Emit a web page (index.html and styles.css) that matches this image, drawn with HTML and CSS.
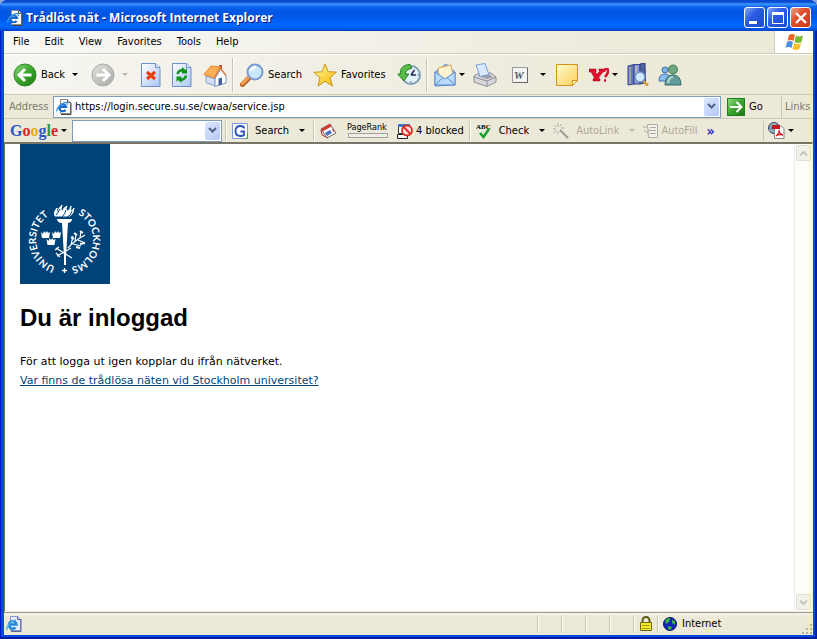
FILE: index.html
```html
<!DOCTYPE html>
<html lang="sv">
<head>
  <meta charset="UTF-8">
  <meta name="viewport" content="width=device-width, initial-scale=1.0">
  <title>Trådlöst nät - Microsoft Internet Explorer</title>
  <link rel="stylesheet" href="styles.css">
</head>
<body>

<svg class="defs" width="0" height="0" aria-hidden="true">
  <defs>
    <linearGradient id="green" x1="0" y1="0" x2="1" y2="1"><stop offset="0" stop-color="#8fdc7c"/><stop offset=".5" stop-color="#3aa52c"/><stop offset="1" stop-color="#1c7a14"/></linearGradient>
    <linearGradient id="grey" x1="0" y1="0" x2="1" y2="1"><stop offset="0" stop-color="#e4e4e0"/><stop offset="1" stop-color="#a4a4a0"/></linearGradient>
    <linearGradient id="sheet" x1="0" y1="0" x2="1" y2="1"><stop offset="0" stop-color="#fff"/><stop offset="1" stop-color="#a9c6f5"/></linearGradient>
    <linearGradient id="note" x1="0" y1="0" x2="1" y2="1"><stop offset="0" stop-color="#fffbd0"/><stop offset="1" stop-color="#fbcf55"/></linearGradient>
    <linearGradient id="gold" x1="0" y1="0" x2="1" y2="1"><stop offset="0" stop-color="#fffca0"/><stop offset="1" stop-color="#f5b400"/></linearGradient>
    <symbol id="iepage" viewBox="0 0 16 16">
      <path d="M4.500.5h7l3 3v11h-10z" fill="#fdfcf4" stroke="#8a8a86"/>
      <path d="M11.500.5v3h3" fill="#ddd" stroke="#555"/>
      <path d="M15 4v11.500H5" fill="none" stroke="#444"/>
      <path d="M9.500 10.800A3.400 3.400 0 1 1 10 8H4" fill="none" stroke="#1767cf" stroke-width="2.200"/>
      <path d="M1 12.500C-.5 10 5 4.500 9 3.500c2.500-.4 2.500 1 2 2.500" fill="none" stroke="#3a98e4" stroke-width="1.300"/>
    </symbol>
  </defs>
</svg>

<div class="window">
  <header class="titlebar">
    <svg class="icon16"><use href="#iepage"/></svg>
    <span class="caption">Trådlöst nät - Microsoft Internet Explorer</span>
    <div class="controls">
      <button class="control" aria-label="Minimize"><svg width="20" height="20"><path d="M4 13h8v3H4z" fill="#fff"/></svg></button>
      <button class="control" aria-label="Maximize"><svg width="20" height="20"><path d="M4 4h12v12H4zM5 7v8h10V7z" fill="#fff" fill-rule="evenodd"/></svg></button>
      <button class="control close" aria-label="Close"><svg width="20" height="20"><path d="M5 5l10 10M15 5L5 15" stroke="#fff" stroke-width="2.400"/></svg></button>
    </div>
  </header>

  <nav class="menubar">
    <button>File</button>
    <button>Edit</button>
    <button>View</button>
    <button>Favorites</button>
    <button>Tools</button>
    <button>Help</button>
    <div class="flag">
      <svg width="20" height="19" viewBox="0 0 20 19">
        <path d="M5 2q3-2 6 0L9.500 8q-3-2-6 0z" fill="#e8622c"/>
        <path d="M12 2.500q3 2 7 0L17.500 9q-4 2-7 0z" fill="#7ab833"/>
        <path d="M3 9q3-2 6 0l-1.500 6q-3-2-6 0z" fill="#4a90e0"/>
        <path d="M10.200 10q3 2 7 0l-1.700 6q-3.500 2-7 0z" fill="#fbc02a"/>
      </svg>
    </div>
  </nav>

  <div class="toolbar">
    <button class="tool back">
      <svg width="24" height="24"><circle cx="12" cy="12" r="11" fill="url(#green)" stroke="#2b8a26"/><path d="M18.500 12H7M12 6l-6 6 6 6" fill="none" stroke="#fff" stroke-width="3"/></svg>
      <span>Back</span>
    </button>
    <button class="drop" aria-label="Back history"></button>
    <button class="tool forward" aria-label="Forward" disabled>
      <svg width="24" height="24"><circle cx="12" cy="12" r="11" fill="url(#grey)" stroke="#aaa"/><path d="M5.500 12H17M12 6l6 6-6 6" fill="none" stroke="#fff" stroke-width="3"/></svg>
    </button>
    <button class="drop" aria-label="Forward history" disabled></button>
    <button class="tool wide" aria-label="Stop">
      <svg width="20" height="24"><path d="M.5.500h14l4.500 4v19H.5z" fill="url(#sheet)" stroke="#6f8fc9"/><path d="M14.500.5v4H19" fill="#dbe6fa" stroke="#6f8fc9"/><path d="M6 9l8 7M14 9l-8 7" stroke="#ee3a10" stroke-width="3"/></svg>
    </button>
    <button class="tool wide" aria-label="Refresh">
      <svg width="20" height="24"><path d="M.5.500h14l4.500 4v19H.5z" fill="url(#sheet)" stroke="#6f8fc9"/><path d="M14.500.5v4H19" fill="#dbe6fa" stroke="#6f8fc9"/><path d="M5.500 11q1-4 6-4M14 12.500q-1 4.500-6 4.500" fill="none" stroke="#12911a" stroke-width="2.500"/><path d="M10 4v6.500h5V5l-1.500 2zM9.500 20v-6.500h-5V19L6 17z" fill="#12911a"/></svg>
    </button>
    <button class="tool" aria-label="Home">
      <svg width="24" height="24"><path d="M3 13l9 3v7l-9-3.500z" fill="#d3dff6" stroke="#8aa0cc"/><path d="M12 15l6-9 5 7v7l-11 3.500z" fill="#fff" stroke="#7c94c8"/><path d="M16 2h3v5l-3-2z" fill="#b55a3c"/><path d="M.8 11.500L8 3l9.500 1-6 11z" fill="#fbb055" stroke="#e58a2a"/><path d="M17 3.500l6.500 8.500-1 1L17 6l-5 9.500-1-1z" fill="#d97a3a"/><path d="M15.500 15.500l3.500-1v7l-3.500 1z" fill="#44609c"/></svg>
    </button>
    <span class="sep"></span>
    <button class="tool wide">
      <svg width="24" height="24"><path d="M2.500 21.500l7-7" stroke="#b8632c" stroke-width="5" stroke-linecap="round"/><path d="M2.500 20.500l6.500-6.500" stroke="#f4a04c" stroke-width="3" stroke-linecap="round"/><circle cx="15" cy="9" r="7.500" fill="#c9e9ff" stroke="#7d99cf" stroke-width="2"/><path d="M10 8q2-4 6-4" stroke="#fff" stroke-width="2.500" fill="none"/></svg>
      <span>Search</span>
    </button>
    <button class="tool wide">
      <svg width="24" height="24"><path d="M12 .8l3.200 7.900 8.300.4-6.400 5.500 2.400 8.500-7.500-4.900-7 4.900 2-8.500L.7 9.300l8.300-.5z" fill="url(#gold)" stroke="#c9961a"/></svg>
      <span>Favorites</span>
    </button>
    <button class="tool" aria-label="History">
      <svg width="24" height="24"><circle cx="14" cy="12" r="9" fill="#e4f2fb" stroke="#7ba0b5" stroke-width="2"/><path d="M14 12l3.500-5M14 12h5" stroke="#225" stroke-width="1.500"/><path d="M14 4v2M14 18v2M20 12h2" stroke="#58a"/><path d="M13 1.500C6 1.500 2.500 6 3.500 11H.8l6 7 5-7H8.500c0-3 2-5 6-5.500z" fill="#5bbb4a" stroke="#237f22"/></svg>
    </button>
    <span class="sep"></span>
    <button class="tool mail" aria-label="Mail">
      <svg width="22" height="24"><path d="M1 9l11-8 9 8v13L1 23z" fill="#8dbcf0" stroke="#5c8bd0"/><path d="M4 5l13-3 2 10-8 5-6-4z" fill="#fff3cf" stroke="#e0a55c"/><path d="M1 9l10 7L21 9v13H1z" fill="#b9dbfa" stroke="#5c8bd0"/><path d="M1 22l8-7.500M21 22l-8-7.500" stroke="#5c8bd0"/></svg>
    </button>
    <button class="drop near" aria-label="Mail options"></button>
    <button class="tool print" aria-label="Print">
      <svg width="24" height="24"><path d="M1 13l5-3h12l5 4v5l-9 4.500L1 19z" fill="#d8d8dc" stroke="#8c8c98"/><path d="M1 14l13 4 9-4M14 18v5" fill="none" stroke="#8c8c98"/><path d="M6 11.500h10l4 2.500-6 2-9-3z" fill="#9b9ba6"/><path d="M3 2l9-1.500 4 11-9 2z" fill="#d9e9ff" stroke="#7ba0dc"/></svg>
    </button>
    <button class="tool word" aria-label="Edit with Word">
      <svg width="16" height="16"><path d="M.5.500h15v15H.5z" fill="#f4f4f4" stroke="#999"/><path d="M1 15.500h14.500V1" fill="none" stroke="#666"/><text x="2" y="12">W</text></svg>
    </button>
    <button class="drop mid" aria-label="Edit options"></button>
    <button class="tool wide" aria-label="Note">
      <svg width="22" height="22"><path d="M.5.500h21v16l-5 5H.5z" fill="url(#note)" stroke="#d2951a"/><path d="M21.500 16.500h-5v5z" fill="#fff5c0" stroke="#d2951a"/></svg>
    </button>
    <button class="tool yahoo" aria-label="Yahoo! Messenger">
      <svg width="20" height="14"><path d="M0 1h7v3H6l2 2 3-3h-1V1h5v3h-1l-4 5v2h1v2H4v-2h1V9L2 4H0z" fill="#e3122c" stroke="#8e0b1c" stroke-width=".5"/><path d="M15 4q0-3 2.500-3T19 4t-3 5M15 12.500h2" stroke="#e3122c" stroke-width="2.500" fill="none"/></svg>
    </button>
    <button class="drop near" aria-label="Yahoo! options"></button>
    <button class="tool research" aria-label="Research">
      <svg width="24" height="24"><path d="M2 3l6-1.500V21L2 22z" fill="#6478c8" stroke="#36458c"/><path d="M8 1.500h6V21H8z" fill="#8c9be0" stroke="#36458c"/><path d="M14 1l5-1 .5 20-5.500 1z" fill="#51639e" stroke="#2e3d74"/><path d="M10 3v16M4 4v17" stroke="#d9c98a"/><path d="M17 18l5 4.500" stroke="#d79a3e" stroke-width="3"/><circle cx="14" cy="14" r="5" fill="#cdeaff" stroke="#6d8ec4" stroke-width="1.500"/></svg>
    </button>
    <button class="tool" aria-label="Messenger">
      <svg width="24" height="22"><circle cx="7" cy="6" r="3" fill="#7ab2e6" stroke="#3c72ac"/><path d="M1 17q0-7 6-7t6 7z" fill="#8abcf0" stroke="#3c72ac"/><circle cx="15" cy="5.500" r="4.500" fill="#6fa57f" stroke="#40785a"/><path d="M7 21q0-10 8-10t8 10z" fill="#5f9c9a" stroke="#35706e"/><path d="M10 19q1-6 5-6" stroke="#b7dccb" stroke-width="2" fill="none"/></svg>
    </button>
  </div>

  <div class="addressbar">
    <label for="address">Address</label>
    <div class="combo">
      <svg class="icon16"><use href="#iepage"/></svg>
      <input id="address" type="text" value="https://login.secure.su.se/cwaa/service.jsp">
      <button class="open" aria-label="Show addresses"><svg width="9" height="7"><path d="M1 1l3.500 3.500L8 1" fill="none" stroke="#4d6185" stroke-width="2"/></svg></button>
    </div>
    <button class="go">
      <svg width="18" height="18"><path d="M0 0h18v18H0z" fill="#1d7f28"/><path d="M1 1h16v16H1z" fill="url(#green)"/><path d="M3 9h11M9.500 4l5 5-5 5" fill="none" stroke="#fff" stroke-width="2"/></svg>
      <span>Go</span>
    </button>
    <span class="links">Links</span>
  </div>

  <div class="googlebar">
    <button class="google" aria-label="Google"><span class="blue">G</span><span class="red">o</span><span class="yellow">o</span><span class="blue">g</span><span class="green">l</span><span class="red">e</span></button>
    <button class="drop tight" aria-label="Google menu"></button>
    <div class="combo query">
      <input type="text" aria-label="Search terms">
      <button class="open" aria-label="Show searches"><svg width="9" height="7"><path d="M1 1l3.500 3.500L8 1" fill="none" stroke="#4d6185" stroke-width="2"/></svg></button>
    </div>
    <span class="sep"></span>
    <button class="gtool">
      <svg width="16" height="16"><path d="M.5.500h15v15H.5z" fill="#fff" stroke="#7c9ce0"/><path d="M12.500 5.500Q11.500 3 8.500 3 3.500 3 3.500 8t5 5q2.500 0 3.500-1V8.500H8.500" fill="none" stroke="#2b4fb8" stroke-width="1.800"/><path d="M13 15.500h2.500v-5" stroke="#3a9a3a" fill="none"/></svg>
      <span>Search</span>
    </button>
    <button class="drop" aria-label="Search options"></button>
    <span class="sep"></span>
    <button class="gtool" aria-label="News">
      <svg width="17" height="16"><path d="M1 6l9-5 6 9-9 5z" fill="#fff" stroke="#666"/><path d="M1 6l9-5 1.500 2.500-9 5z" fill="#d43a30"/><path d="M5 10l5-3 2 3-5 3z" fill="#4a70c0"/><path d="M12 6l2 3M1 7l1 5 6 3" stroke="#b33" fill="none"/></svg>
    </button>
    <div class="rank"><span>PageRank</span><i></i></div>
    <button class="gtool blocked">
      <svg width="16" height="16"><path d="M1.500 1.500h11v9h-11z" fill="#fff" stroke="#333"/><path d="M1 1h12v3H1z" fill="#3d79c8"/><path d="M.5 11.500h10v4H.5z" fill="#fff" stroke="#222"/><circle cx="10" cy="7.500" r="5" fill="#fbdcd8" stroke="#dd2a20" stroke-width="1.800"/><path d="M6.500 4l7 7" stroke="#dd2a20" stroke-width="1.800"/></svg>
      <span>4 blocked</span>
    </button>
    <span class="sep"></span>
    <button class="gtool check">
      <svg width="16" height="16"><text x="0" y="6">ABC</text><path d="M4 10l3.500 4L13 6" fill="none" stroke="#16a02a" stroke-width="2.500"/></svg>
      <span>Check</span>
    </button>
    <button class="drop" aria-label="Check options"></button>
    <button class="gtool" disabled>
      <svg width="16" height="16"><path d="M7 7l8 8" stroke="#999" stroke-width="2"/><path d="M5 0v4M5 8v3M0 6h3M8 5h3M1 2l2 2M9 1L7 3M1 10l2-2" stroke="#aaa"/></svg>
      <span>AutoLink</span>
    </button>
    <button class="drop" aria-label="AutoLink options" disabled></button>
    <button class="gtool autofill" disabled>
      <svg width="16" height="16"><path d="M4.500 1.500h10v13h-9z" fill="#f3f1e8" stroke="#aaa"/><path d="M7 4.500h6M7 7.500h6M7 10.500h6M0 4h5M1 7l3 3 3-4" stroke="#aaa" fill="none"/></svg>
      <span>AutoFill</span>
    </button>
    <button class="more">»</button>
    <div class="pdf">
      <svg width="17" height="17"><circle cx="6" cy="6" r="5.500" fill="#6e9cc4" stroke="#446"/><path d="M2 4q3-3 6-2M1 8q4 2 8 0" stroke="#a8d0a0" fill="none"/><path d="M6.500 3.500h6l3.500 3v10H6.500z" fill="#fff" stroke="#888"/><path d="M4 3h8v4H4z" fill="#c9151b"/><path d="M8 14q4-3 3-6 0 4 4 5-4-1-7 1z" fill="none" stroke="#d51a1f" stroke-width="1.300"/></svg>
      <button class="drop tight" aria-label="PDF options"></button>
    </div>
  </div>

  <div class="view">
    <main>
      <svg class="seal" width="90" height="140" viewBox="0 0 90 140" role="img" aria-label="Stockholms universitet">
        <path d="M0 0h90v140H0z" fill="#004379"/>
        <path id="leftArc" d="M44.500 124A28.500 28.500 0 0 1 44.500 67" fill="none"/>
        <path id="rightArc" d="M44.500 67A28.500 28.500 0 0 1 44.500 124" fill="none"/>
        <text text-anchor="middle"><textPath href="#leftArc" startOffset="46%">UNIVERSITET</textPath></text>
        <text text-anchor="middle"><textPath href="#rightArc" startOffset="54%">STOCKHOLMS</textPath></text>
        <path d="M44.500 124v5M42 126.500h5" stroke="#fff" stroke-width="1.300"/>
        <g fill="none" stroke="#fff">
          <path d="M35 72q-2-4 2-8-1 3 1 5 0-5 4-8-2 5 0 7 2-5 5-6-2 3 0 5 3 0 4-5 0 4-1 5 3 0 4-3 0 5-4 8z" fill="#fff"/>
          <path d="M36 71q2-2 4-6M42 73q3-3 4-7M47 73q4-1 5-6" stroke="#004379"/>
          <path d="M37 75h15q0 3-4 4h-7q-4-1-4-4z" fill="#fff" stroke="none"/>
          <path d="M42 79h6l-2 33h-2z" fill="#fff" stroke="none"/>
          <path d="M45 109v12" stroke-width="2"/>
          <path d="M48 104q6-7 17-13M51 101l2-9M55 98l1-8M58 96l7 3M53 100l8 2M60 94l1-7" stroke-width="1.200"/>
          <path d="M51 93l3 2M54 89l3 2M60 87l3 2M60 100l5-1M56 103l4 1" stroke-width="2"/>
          <path d="M36 104l16 10M37 112l14-8M35 106l4-3M36 109l4 4" stroke-width="1.200"/>
        </g>
        <g fill="#fff">
          <path id="crown" d="M21 88l2 2 1-3 1.500 2L27 87l1 2 2-1-1 6h-7z"/>
          <use href="#crown" x="11"/>
          <use href="#crown" x="5.500" y="7"/>
        </g>
      </svg>
      <h1>Du är inloggad</h1>
      <p>För att logga ut igen kopplar du ifrån nätverket.<br>
      <a href="#">Var finns de trådlösa näten vid Stockholm universitet?</a></p>
    </main>
    <div class="scrollbar">
      <button aria-label="Scroll up" disabled><svg width="9" height="7"><path d="M1 5.500L4.500 2 8 5.500" fill="none" stroke="#c6c6bc" stroke-width="2"/></svg></button>
      <button aria-label="Scroll down" disabled><svg width="9" height="7"><path d="M1 1.500L4.500 5 8 1.500" fill="none" stroke="#c6c6bc" stroke-width="2"/></svg></button>
    </div>
  </div>

  <footer class="statusbar">
    <svg class="icon16"><path d="M4.500.5h7l3 3v11h-10z" fill="#e6ecfb" stroke="#8592cc"/><path d="M15 3v12.500H5M11.500.5v3h3" fill="none" stroke="#5a6298"/><path d="M9.500 11.500A3.800 3.800 0 1 1 10.500 8.500H3" fill="none" stroke="#2088d8" stroke-width="2.400"/><path d="M1 14C-.5 11 5 5 10 4" fill="none" stroke="#49b0ec" stroke-width="1.400"/></svg>
    <div class="panes">
      <span class="pane"></span>
      <span class="pane"></span>
      <span class="pane"></span>
      <span class="pane"></span>
      <span class="pane lock"><svg width="12" height="16"><path d="M2.500 7V4.500a3.500 3.500 0 0 1 7 0V7" fill="none" stroke="#5c5a10" stroke-width="2"/><path d="M.5 6.500h11v8H.5z" fill="#f4e92a" stroke="#6b6510"/><path d="M2 9.500h8M2 12.500h8" stroke="#a59a10"/></svg></span>
      <span class="pane zone"><svg width="14" height="14"><circle cx="7" cy="7" r="6.500" fill="#1224b8" stroke="#0a1560"/><path d="M2 4q3-4 5-3l-1 4-3 2zM9 3l3 1v4l-3-2zM5 9l4 1-1 3-3-1z" fill="#35b53a"/></svg>Internet</span>
    </div>
    <svg class="grip" width="12" height="12"><path d="M9 1h2v2H9zM5 5h2v2H5zM9 5h2v2H9zM1 9h2v2H1zM5 9h2v2H5zM9 9h2v2H9z" fill="#b8b4a0"/></svg>
  </footer>
</div>

</body>
</html>
```
FILE: styles.css
```css
* {
  box-sizing: border-box;
}
body {
  margin: 0;
  background-color: #8fa9d8;
  font-family: "DejaVu Sans Condensed", "Noto Sans", sans-serif;
  font-size: 11px;
  line-height: 14px;
  color: #000;
}
button {
  display: flex;
  align-items: center;
  padding: 0;
  border: none;
  background: none;
  font: inherit;
  color: inherit;
  white-space: nowrap;
}
svg {
  display: block;
  flex: none;
}
.defs {
  position: absolute;
}
.icon16 {
  width: 16px;
  height: 16px;
}
.window {
  display: flex;
  flex-direction: column;
  min-height: 100vh;
  padding: 0 4px 4px;
  border-radius: 8px 8px 0 0;
  background-color: #0a48e0;
  box-shadow: inset 1px 0 #0019cf, inset -2px -2px #001ea0;
}

/* title bar */
.titlebar {
  display: flex;
  align-items: center;
  gap: 3px;
  height: 31px;
  margin: 0 -4px;
  padding: 4px 6px 0 7px;
  border-radius: 8px 8px 0 0;
  background: linear-gradient(#0a4ad0 0, #0a4ad0 2px, #3c96ff 4px, #0a62ee 7px, #0055e2 12px, #0058ea 18px, #0068ff 24px, #0066ff 27px, #0042c4 31px);
}
.caption {
  flex: 1;
  font-family: "Open Sans", sans-serif;
  font-size: 12px;
  font-weight: bold;
  color: #fff;
  text-shadow: 1px 1px #0a1883;
}
.controls {
  display: flex;
  gap: 2px;
}
.control {
  justify-content: center;
  width: 21px;
  height: 21px;
  border: 1px solid #fff;
  border-radius: 3px;
  background: linear-gradient(135deg, #86a8f4, #2a5ce4 40%, #1c4ad0);
}
.control.close {
  background: linear-gradient(135deg, #f0a48c, #e2512e 40%, #c8381a);
}

/* menu */
.menubar {
  display: flex;
  height: 23px;
  padding-left: 2px;
  border-bottom: 1px solid #d0ccb8;
  background: linear-gradient(90deg, #f8f8f6, #ece9d8 90%);
}
.menubar button {
  padding: 0 8px 0 7px;
}
.flag {
  display: flex;
  align-items: center;
  justify-content: center;
  width: 39px;
  margin-left: auto;
  border-left: 1px solid #d0ccb8;
  background-color: #fff;
}

/* standard buttons */
.toolbar {
  display: flex;
  align-items: center;
  height: 41px;
  padding-left: 9px;
  border-top: 1px solid #fff;
  border-bottom: 1px solid #d0ccb8;
  background: linear-gradient(90deg, #f6f5f0, #ece9d8 85%);
}
.tool {
  gap: 4px;
  margin-right: 5px;
}
.tool.back,
.tool.forward,
.tool.mail,
.tool.yahoo {
  margin-right: 0;
}
.tool.wide {
  margin-right: 11px;
}
.tool.print {
  margin-right: 15px;
}
.tool.research {
  margin-right: 8px;
}
.drop {
  justify-content: center;
  width: 12px;
  height: 16px;
  margin: 0 10px 0 4px;
}
.drop::before {
  content: "";
  border: 3px solid transparent;
  border-top-color: #000;
  border-bottom: 0;
}
.drop:disabled::before {
  border-top-color: #b8b5a6;
}
.drop.near {
  margin: 0 5px 0 0;
}
.drop.mid {
  margin-right: 7px;
}
.sep {
  width: 2px;
  height: 34px;
  margin-right: 6px;
  border-left: 1px solid #c8c4ae;
  border-right: 1px solid #fff;
}
.word text {
  font: italic bold 11px "Liberation Serif", serif;
  fill: #555;
}

/* address */
.addressbar {
  display: flex;
  align-items: center;
  height: 23px;
  padding-left: 5px;
  background-color: #ece9d8;
}
.addressbar label {
  width: 44px;
  color: #7c7a6f;
}
.combo {
  display: flex;
  flex: 1;
  align-items: center;
  height: 22px;
  padding: 1px 1px 1px 2px;
  border: 1px solid #7f9db9;
  background-color: #fff;
}
.combo input {
  flex: 1;
  min-width: 0;
  padding: 0 3px;
  border: none;
  outline: none;
  background: none;
  font: inherit;
  color: #000;
}
.open {
  justify-content: center;
  align-self: stretch;
  width: 15px;
  border-radius: 2px;
  background: linear-gradient(135deg, #dce6fe, #b4c8f6);
}
.go {
  gap: 4px;
  width: 54px;
  margin-left: 6px;
}
.links {
  width: 32px;
  padding-left: 3px;
  border-left: 1px solid #c8c4ae;
  line-height: 22px;
  color: #7c7a6f;
}

/* google toolbar */
.googlebar {
  display: flex;
  align-items: center;
  height: 24px;
  padding-left: 6px;
  border-top: 1px solid #d0ccb8;
  background-color: #ece9d8;
}
.google {
  font-family: "Liberation Serif", serif;
  font-size: 16px;
  font-weight: bold;
}
.blue { color: #2a56c6; }
.red { color: #d4281e; }
.yellow { color: #e5ae10; }
.green { color: #2c9a3c; }
.query {
  flex: none;
  width: 150px;
  margin: 0 3px 0 2px;
}
.googlebar .sep {
  height: 20px;
  margin-right: 5px;
}
.googlebar .drop {
  margin: 0 5px 0 7px;
}
.googlebar .drop.tight {
  margin: 0;
}
.gtool {
  gap: 7px;
}
.gtool:disabled {
  color: #aca899;
}
.rank {
  margin: 0 8px 0 10px;
  font-size: 9px;
  line-height: 10px;
}
.rank i {
  display: block;
  width: 40px;
  height: 5px;
  margin: 1px;
  border: 1px solid #a0a0a0;
  background-color: #f0eee4;
}
.gtool.blocked {
  gap: 3px;
  margin-right: 5px;
}
.gtool.autofill {
  gap: 2px;
}
.check text {
  font: bold 7px "Liberation Serif", serif;
}
.more {
  margin-left: 9px;
  font-size: 14px;
  font-weight: bold;
  color: #3a28c8;
}
.pdf {
  display: flex;
  align-items: center;
  width: 50px;
  height: 20px;
  margin-left: auto;
  padding-left: 4px;
  border-left: 1px solid #c8c4ae;
}

/* page */
.view {
  display: flex;
  flex: 1;
  border: 1px solid #f1efe2;
  border-top: 2px solid #77756a;
  border-left: 1px solid #77756a;
  background-color: #fff;
}
main {
  flex: 1;
  padding-left: 15px;
  font-family: "DejaVu Sans", sans-serif;
}
.seal text {
  font: bold 10px Lato, sans-serif;
  fill: #fff;
}
h1 {
  margin: 20px 0;
  font-family: "Liberation Sans", sans-serif;
  font-size: 24px;
  line-height: 28px;
}
p {
  margin: 0;
  line-height: 19px;
}
a {
  color: #004379;
}
.scrollbar {
  display: flex;
  flex-direction: column;
  justify-content: space-between;
  width: 18px;
  padding: 1px;
  border-left: 1px solid #eeede5;
  background-color: #fdfdfa;
}
.scrollbar button {
  justify-content: center;
  height: 16px;
  border: 1px solid #e2e0d6;
  border-radius: 2px;
  background-color: #f3f2ea;
}

/* status bar */
.statusbar {
  display: flex;
  align-items: center;
  height: 23px;
  padding-left: 2px;
  border-top: 1px solid #9c9a8c;
  background: linear-gradient(#f4f2e8, #ece9d8 5px);
}
.panes {
  display: flex;
  margin-left: auto;
}
.pane {
  display: flex;
  align-items: center;
  width: 24px;
  height: 18px;
  border-left: 1px solid #c8c4ae;
  box-shadow: inset 1px 0 #fff;
}
.lock {
  justify-content: center;
}
.zone {
  gap: 5px;
  width: 144px;
  padding-left: 5px;
}
.grip {
  align-self: flex-end;
}
```
